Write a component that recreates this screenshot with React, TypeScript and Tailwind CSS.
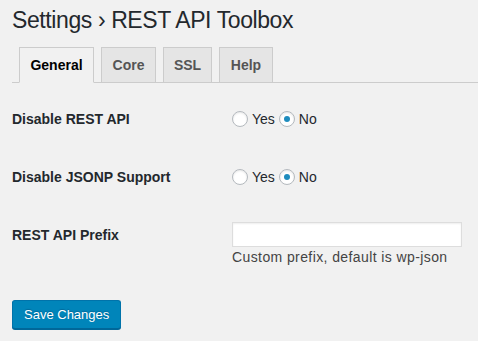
import React, { useState } from 'react';

const tabs = [
  { name: 'General', width: 'w-[75px]' },
  { name: 'Core', width: 'w-[55px]' },
  { name: 'SSL', width: 'w-[49px]' },
  { name: 'Help', width: 'w-[54px]' },
];

type RadioProps = {
  checked: boolean;
  label: string;
  onSelect: () => void;
};

// WordPress style radio, drawn with spans so the checked dot renders reliably
function Radio({ checked, label, onSelect }: RadioProps) {
  return (
    <label className="flex cursor-pointer items-center" onClick={onSelect}>
      <span
        role="radio"
        aria-checked={checked}
        className="mr-[4px] flex h-4 w-4 items-center justify-center rounded-full border border-[#b4b9be] bg-white shadow-[inset_0_1px_2px_rgba(0,0,0,0.1)]"
      >
        {checked && <span className="h-[6px] w-[6px] rounded-full bg-[#1e8cbe]" />}
      </span>
      <span className="mr-[4px]">{label}</span>
    </label>
  );
}

type YesNoProps = {
  value: boolean;
  onChange: (v: boolean) => void;
};

function YesNo({ value, onChange }: YesNoProps) {
  return (
    <div className="flex h-[18px] items-center">
      <Radio checked={value} label="Yes" onSelect={() => onChange(true)} />
      <Radio checked={!value} label="No" onSelect={() => onChange(false)} />
    </div>
  );
}

export default function App() {
  const [activeTab, setActiveTab] = useState('General');
  const [disableRest, setDisableRest] = useState(false);
  const [disableJsonp, setDisableJsonp] = useState(false);
  const [prefix, setPrefix] = useState('');

  return (
    <div className="min-h-[341px] bg-[#f1f1f1] pl-3 font-['Liberation_Sans',Arial,sans-serif] text-[14px] text-[#23282d]">
      <h1 className="pb-[4px] pt-[5px] text-[23px] font-normal leading-[30px] tracking-[-0.4px]">
        Settings › REST API Toolbox
      </h1>

      {/* Tabs */}
      <div className="flex items-end gap-[7px] border-b border-[#ccc] pl-[7px] pt-[8px]">
        {tabs.map((tab) => {
          const active = tab.name === activeTab;
          return (
            <button
              key={tab.name}
              onClick={() => setActiveTab(tab.name)}
              className={
                active
                  ? `${tab.width} -mb-px border border-[#ccc] border-b-[#f1f1f1] bg-[#f1f1f1] py-[5px] text-center text-[14px] font-bold leading-[24px] text-black`
                  : `${tab.width} border border-b-0 border-[#ccc] bg-[#e5e5e5] py-[5px] text-center text-[14px] font-bold leading-[24px] text-[#555]`
              }
            >
              {tab.name}
            </button>
          );
        })}
      </div>

      {/* Settings table */}
      <div className="mt-[7px] grid grid-cols-[220px_1fr]">
        <div className="py-[20px] pr-[10px] font-bold leading-[18px]">Disable REST API</div>
        <div className="py-[20px]">
          <YesNo value={disableRest} onChange={setDisableRest} />
        </div>

        <div className="py-[20px] pr-[10px] font-bold leading-[18px]">Disable JSONP Support</div>
        <div className="py-[20px]">
          <YesNo value={disableJsonp} onChange={setDisableJsonp} />
        </div>

        <div className="py-[20px] pr-[10px] font-bold leading-[18px]">REST API Prefix</div>
        <div className="pb-[15px] pt-[16px]">
          <input
            type="text"
            value={prefix}
            onChange={(e) => setPrefix(e.target.value)}
            className="block h-[25px] w-[230px] border border-[#ddd] bg-white px-[5px] text-[14px] shadow-[inset_0_1px_2px_rgba(0,0,0,0.07)] outline-none"
          />
          <p className="mt-[1px] leading-[18px] tracking-[0.4px] text-[#444]">Custom prefix, default is wp-json</p>
        </div>
      </div>

      <div className="mt-[19px]">
        <button className="h-[29px] rounded-[3px] border border-[#0073aa] border-b-[#006799] bg-[#0085ba] px-[11px] text-[13px] leading-[26px] text-white shadow-[0_1px_0_#006799] [text-shadow:0_-1px_1px_#006799]">
          Save Changes
        </button>
      </div>
    </div>
  );
}
